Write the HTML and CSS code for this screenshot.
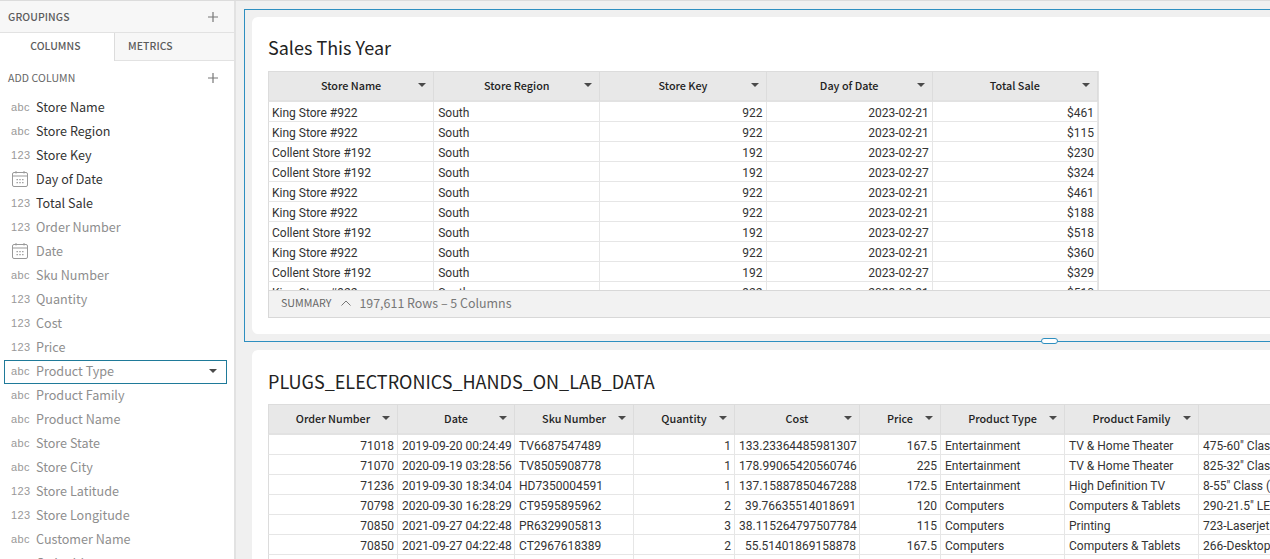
FILE: index.html
```html
<!DOCTYPE html>
<html lang="en">
<head>
    <meta charset="UTF-8">
    <meta name="viewport" content="width=device-width, initial-scale=1.0">
    <title>Sales This Year</title>
    <link rel="stylesheet" href="styles.css">
</head>
<body>
    <svg class="sprites" width="0" height="0">
        <symbol id="calendar" viewBox="0 0 18 18">
            <path d="M3 2.500h12a1.500 1.500 0 0 1 1.500 1.500v11a1.500 1.500 0 0 1-1.500 1.500H3A1.500 1.500 0 0 1 1.500 15V4A1.500 1.500 0 0 1 3 2.500zM1.500 6h15M5 1v2.500M13 1v2.500" fill="none" stroke="currentColor" stroke-width="1"/>
            <path d="M5.500 9h1.400v1.200H5.500zM8.300 9h1.400v1.200H8.300zM11.100 9h1.400v1.200h-1.400zM5.500 12h1.400v1.200H5.500zM8.300 12h1.400v1.200H8.300zM11.100 12h1.400v1.200h-1.400z" fill="currentColor"/>
        </symbol>
        <symbol id="plus" viewBox="0 0 10 10">
            <path d="M5 0v10M0 5h10" fill="none" stroke="currentColor" stroke-width="1.200"/>
        </symbol>
    </svg>

    <!-- Painel lateral -->
    <aside class="sidebar">
        <div class="panel-head">
            <span>GROUPINGS</span>
            <svg class="plus"><use href="#plus"/></svg>
        </div>
        <div class="tabs">
            <div class="tab active">COLUMNS</div>
            <div class="tab">METRICS</div>
        </div>
        <div class="add-column">
            <span>ADD COLUMN</span>
            <svg class="plus"><use href="#plus"/></svg>
        </div>
        <ul class="columns">
            <li class="on"><span class="type">abc</span>Store Name</li>
            <li class="on"><span class="type">abc</span>Store Region</li>
            <li class="on"><span class="type">123</span>Store Key</li>
            <li class="on"><span class="type"><svg class="cal"><use href="#calendar"/></svg></span>Day of Date</li>
            <li class="on"><span class="type">123</span>Total Sale</li>
            <li><span class="type">123</span>Order Number</li>
            <li><span class="type"><svg class="cal"><use href="#calendar"/></svg></span>Date</li>
            <li><span class="type">abc</span>Sku Number</li>
            <li><span class="type">123</span>Quantity</li>
            <li><span class="type">123</span>Cost</li>
            <li><span class="type">123</span>Price</li>
            <li class="picked"><span class="type">abc</span>Product Type<i class="caret"></i></li>
            <li><span class="type">abc</span>Product Family</li>
            <li><span class="type">abc</span>Product Name</li>
            <li><span class="type">abc</span>Store State</li>
            <li><span class="type">abc</span>Store City</li>
            <li><span class="type">123</span>Store Latitude</li>
            <li><span class="type">123</span>Store Longitude</li>
            <li><span class="type">abc</span>Customer Name</li>
            <li><span class="type">abc</span>Order Id</li>
        </ul>
    </aside>

    <!-- Area principal -->
    <main class="canvas">
        <div class="selected">
            <section class="card">
                <h2>Sales This Year</h2>
                <div class="table-box">
                    <table class="grid sales">
                        <colgroup>
                            <col class="c166"><col class="c166"><col class="c166"><col class="c166"><col class="c165">
                        </colgroup>
                        <thead>
                            <tr>
                                <th><div class="th"><span>Store Name</span><i class="caret"></i></div></th>
                                <th><div class="th"><span>Store Region</span><i class="caret"></i></div></th>
                                <th><div class="th"><span>Store Key</span><i class="caret"></i></div></th>
                                <th><div class="th"><span>Day of Date</span><i class="caret"></i></div></th>
                                <th><div class="th"><span>Total Sale</span><i class="caret"></i></div></th>
                            </tr>
                        </thead>
                        <tbody>
                            <tr><td>King Store #922</td><td>South</td><td class="num">922</td><td class="num">2023-02-21</td><td class="num">$461</td></tr>
                            <tr><td>King Store #922</td><td>South</td><td class="num">922</td><td class="num">2023-02-21</td><td class="num">$115</td></tr>
                            <tr><td>Collent Store #192</td><td>South</td><td class="num">192</td><td class="num">2023-02-27</td><td class="num">$230</td></tr>
                            <tr><td>Collent Store #192</td><td>South</td><td class="num">192</td><td class="num">2023-02-27</td><td class="num">$324</td></tr>
                            <tr><td>King Store #922</td><td>South</td><td class="num">922</td><td class="num">2023-02-21</td><td class="num">$461</td></tr>
                            <tr><td>King Store #922</td><td>South</td><td class="num">922</td><td class="num">2023-02-21</td><td class="num">$188</td></tr>
                            <tr><td>Collent Store #192</td><td>South</td><td class="num">192</td><td class="num">2023-02-27</td><td class="num">$518</td></tr>
                            <tr><td>King Store #922</td><td>South</td><td class="num">922</td><td class="num">2023-02-21</td><td class="num">$360</td></tr>
                            <tr><td>Collent Store #192</td><td>South</td><td class="num">192</td><td class="num">2023-02-27</td><td class="num">$329</td></tr>
                            <tr><td>King Store #922</td><td>South</td><td class="num">922</td><td class="num">2023-02-21</td><td class="num">$510</td></tr>
                        </tbody>
                    </table>
                </div>
                <div class="summary">
                    <span class="summary-label">SUMMARY</span>
                    <svg class="chevron" width="12" height="8" viewBox="0 0 12 8"><path d="M1.500 6.500L6 2l4.500 4.500" fill="none" stroke="#777" stroke-width="1"/></svg>
                    <span class="summary-count">197,611 Rows – 5 Columns</span>
                </div>
            </section>
            <span class="handle"></span>
        </div>

        <section class="card second">
            <h2>PLUGS_ELECTRONICS_HANDS_ON_LAB_DATA</h2>
            <table class="grid lab">
                <colgroup>
                    <col class="c130"><col class="c117"><col class="c119"><col class="c101"><col class="c125"><col class="c81"><col class="c124"><col class="c134"><col class="c166">
                </colgroup>
                <thead>
                    <tr>
                        <th><div class="th"><span>Order Number</span><i class="caret"></i></div></th>
                        <th><div class="th"><span>Date</span><i class="caret"></i></div></th>
                        <th><div class="th"><span>Sku Number</span><i class="caret"></i></div></th>
                        <th><div class="th"><span>Quantity</span><i class="caret"></i></div></th>
                        <th><div class="th"><span>Cost</span><i class="caret"></i></div></th>
                        <th><div class="th"><span>Price</span><i class="caret"></i></div></th>
                        <th><div class="th"><span>Product Type</span><i class="caret"></i></div></th>
                        <th><div class="th"><span>Product Family</span><i class="caret"></i></div></th>
                        <th><div class="th"></div></th>
                    </tr>
                </thead>
                <tbody>
                    <tr><td class="num">71018</td><td>2019-09-20 00:24:49</td><td>TV6687547489</td><td class="num">1</td><td class="num">133.23364485981307</td><td class="num">167.5</td><td>Entertainment</td><td>TV &amp; Home Theater</td><td>475-60" Class</td></tr>
                    <tr><td class="num">71070</td><td>2020-09-19 03:28:56</td><td>TV8505908778</td><td class="num">1</td><td class="num">178.99065420560746</td><td class="num">225</td><td>Entertainment</td><td>TV &amp; Home Theater</td><td>825-32" Class</td></tr>
                    <tr><td class="num">71236</td><td>2019-09-30 18:34:04</td><td>HD7350004591</td><td class="num">1</td><td class="num">137.15887850467288</td><td class="num">172.5</td><td>Entertainment</td><td>High Definition TV</td><td>8-55" Class (</td></tr>
                    <tr><td class="num">70798</td><td>2020-09-30 16:28:29</td><td>CT9595895962</td><td class="num">2</td><td class="num">39.76635514018691</td><td class="num">120</td><td>Computers</td><td>Computers &amp; Tablets</td><td>290-21.5" LE</td></tr>
                    <tr><td class="num">70850</td><td>2021-09-27 04:22:48</td><td>PR6329905813</td><td class="num">3</td><td class="num">38.115264797507784</td><td class="num">115</td><td>Computers</td><td>Printing</td><td>723-Laserjet</td></tr>
                    <tr><td class="num">70850</td><td>2021-09-27 04:22:48</td><td>CT2967618389</td><td class="num">2</td><td class="num">55.51401869158878</td><td class="num">167.5</td><td>Computers</td><td>Computers &amp; Tablets</td><td>266-Desktop</td></tr>
                    <tr><td class="num"></td><td></td><td></td><td class="num"></td><td class="num"></td><td class="num"></td><td></td><td></td><td></td></tr>
                </tbody>
            </table>
        </section>
    </main>
</body>
</html>
```

FILE: styles.css
```css
/* Geral */
html, body {
    height: 100%;
}

body {
    margin: 0;
    display: flex;
    overflow: hidden;
    border-top: 1px solid #dcdcdc;
    box-sizing: border-box;
    font-family: "Noto Sans CJK JP", "Noto Sans", sans-serif;
    background-color: #f0f0f0;
    color: #333;
}

.sprites {
    position: absolute;
}

.caret {
    display: block;
    width: 0;
    height: 0;
    border-left: 4px solid transparent;
    border-right: 4px solid transparent;
    border-top: 4px solid #4a4a4a;
}

/* Painel lateral */
.sidebar {
    flex: 0 0 234px;
    overflow: hidden;
    background-color: #fff;
    border-right: 2px solid #e2e2e2;
}

.panel-head, .add-column {
    display: flex;
    justify-content: space-between;
    align-items: center;
    padding: 0 16px 0 8px;
    line-height: 16px;
}

.panel-head {
    height: 31px;
    background-color: #f7f7f7;
    font-size: 10.4px;
    font-weight: 500;
    letter-spacing: 0.1px;
    color: #5c5c5c;
}

.plus {
    width: 10px;
    height: 10px;
    color: #777;
}

.tabs {
    display: flex;
    height: 27px;
    border-top: 1px solid #e2e2e2;
    border-bottom: 1px solid #e2e2e2;
    background-color: #f7f7f7;
}

.tab {
    flex: 1;
    padding-left: 13px;
    font-size: 10.4px;
    font-weight: 500;
    line-height: 26px;
    letter-spacing: 0.1px;
    color: #5c5c5c;
}

.tab.active {
    flex: 0 0 111px;
    box-sizing: content-box;
    padding: 0 3px 0 0;
    text-align: center;
    background-color: #fff;
    border-right: 1px solid #dcdcdc;
    margin-bottom: -1px;
}

.add-column {
    height: 35px;
    padding-bottom: 1px;
    box-sizing: border-box;
    font-size: 10.5px;
    letter-spacing: 0.1px;
    color: #666;
}

.columns {
    list-style: none;
    margin: 0;
    padding: 0 7px 0 4px;
}

.columns li {
    display: flex;
    align-items: center;
    height: 24px;
    padding-bottom: 3px;
    box-sizing: border-box;
    font-size: 12.6px;
    color: #8e8e8e;
}

.columns li.on {
    color: #333;
}

.columns li.picked {
    border: 1px solid #1f7a99;
}

.columns li.picked .type {
    margin-left: -1px;
}

.columns li.picked .caret {
    margin-left: auto;
    margin-right: 9px;
}

.type {
    flex: 0 0 32px;
    padding-left: 7px;
    box-sizing: border-box;
    font-family: "Liberation Sans", sans-serif;
    font-size: 11px;
    letter-spacing: 0.4px;
    color: #999;
}

.cal {
    display: block;
    width: 18px;
    height: 18px;
}

/* Area principal */
.canvas {
    flex: 1;
    min-width: 0;
    overflow: hidden;
    padding: 8px 0 0 8px;
}

.selected {
    position: relative;
    padding: 7px 0 7px 7px;
    border: 1px solid #2e8fc0;
    border-right: none;
}

.handle {
    position: absolute;
    left: 796px;
    bottom: -3px;
    width: 15px;
    height: 4px;
    background-color: #fff;
    border: 1px solid #2e8fc0;
    border-radius: 3px;
}

.card {
    padding: 0 0 16px 16px;
    background-color: #fff;
    border-radius: 6px 0 0 6px;
}

.second {
    margin: 8px 0 0 8px;
    padding-bottom: 0;
}

.card h2 {
    margin: 0;
    padding: 17px 0 11px;
    font-size: 18px;
    font-weight: 400;
    line-height: 26px;
    color: #222;
}

.second h2 {
    padding: 18px 0 10px;
}

/* Tabelas */
.table-box {
    height: 219px;
    overflow: hidden;
}

.grid {
    border-collapse: separate;
    border-spacing: 0;
    table-layout: fixed;
    font-family: Roboto, sans-serif;
    font-size: 12px;
}

.sales {
    width: 831px;
    border-right: 1px solid #e2e2e2;
}

.lab {
    width: 1097px;
}

.c81 { width: 81px; }
.c101 { width: 101px; }
.c117 { width: 117px; }
.c119 { width: 119px; }
.c124 { width: 124px; }
.c125 { width: 125px; }
.c130 { width: 130px; }
.c134 { width: 134px; }
.c165 { width: 165px; }
.c166 { width: 166px; }

.grid th {
    height: 31px;
    padding: 0;
    box-sizing: border-box;
    background-color: #e8e8e8;
    border-top: 1px solid #dcdcdc;
    border-bottom: 2px solid #e2e2e2;
    border-right: 1px solid #dcdcdc;
}

.grid th:first-child, .grid td:first-child {
    border-left: 1px solid #dcdcdc;
}

.th {
    display: grid;
    grid-template-columns: 1fr auto 1fr;
    align-items: center;
    padding: 0 7px 3px;
    font-family: "Noto Sans CJK JP", "Noto Sans", sans-serif;
    font-size: 10.8px;
    font-weight: 500;
    line-height: 16px;
    color: #222;
}

.th span {
    grid-column: 2;
}

.th .caret {
    grid-column: 3;
    justify-self: end;
}

.grid td {
    height: 20px;
    padding: 2px 3px 0 4px;
    box-sizing: border-box;
    white-space: nowrap;
    overflow: hidden;
    line-height: 16px;
    border-bottom: 1px solid #e6e6e6;
    border-right: 1px solid #e6e6e6;
    color: #333;
}

.grid td:first-child {
    padding-left: 3px;
}

.grid td.num {
    text-align: right;
}

/* Resumo */
.summary {
    display: flex;
    align-items: center;
    height: 28px;
    box-sizing: border-box;
    padding: 0 0 2px 12px;
    background-color: #f2f2f2;
    border: 1px solid #d8d8d8;
    border-width: 1px 0 1px 1px;
}

.summary-label {
    font-size: 10.7px;
    line-height: 16px;
    color: #666;
}

.chevron {
    margin: 0 7px 0 9px;
}

.summary-count {
    font-size: 12.45px;
    line-height: 18px;
    color: #777;
}
```
